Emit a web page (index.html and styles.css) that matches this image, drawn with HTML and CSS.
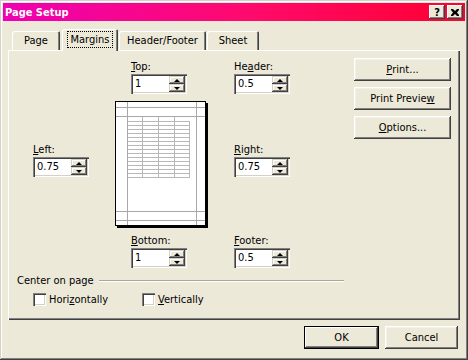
FILE: index.html
```html
<!DOCTYPE html>
<html lang="en">
<head>
    <meta charset="UTF-8">
    <title>Page Setup</title>
    <link rel="stylesheet" href="styles.css">
</head>
<body>
    <div class="window">
        <div class="titlebar">
            <span class="title">Page Setup</span>
            <div class="caption-btns">
                <div class="cap">?</div>
                <div class="cap">
                    <svg width="8" height="7" viewBox="0 0 8 7">
                        <path d="M0 0h2l2 2 2-2h2v1l-2 2.5 2 2.5v1h-2l-2-2-2 2h-2v-1l2-2.5-2-2.5z" fill="#000"/>
                    </svg>
                </div>
            </div>
        </div>

        <div class="tabs">
            <div class="tab t-page">Page</div>
            <div class="tab t-margins active"><span class="focus">Margins</span></div>
            <div class="tab t-header">Header/Footer</div>
            <div class="tab t-sheet">Sheet</div>
        </div>

        <div class="panel">
            <!-- top row -->
            <div class="field f-top">
                <label><u>T</u>op:</label>
                <div class="spin"><span class="val">1</span><div class="arrows"><div class="arr up"></div><div class="arr down"></div></div></div>
            </div>
            <div class="field f-header">
                <label>He<u>a</u>der:</label>
                <div class="spin"><span class="val">0.5</span><div class="arrows"><div class="arr up"></div><div class="arr down"></div></div></div>
            </div>
            <div class="side-btns">
                <div class="btn"><u>P</u>rint...</div>
                <div class="btn">Print Previe<u>w</u></div>
                <div class="btn"><u>O</u>ptions...</div>
            </div>

            <!-- middle row -->
            <div class="field f-left">
                <label><u>L</u>eft:</label>
                <div class="spin"><span class="val">0.75</span><div class="arrows"><div class="arr up"></div><div class="arr down"></div></div></div>
            </div>
            <div class="preview">
                <svg width="94" height="128" viewBox="0 0 94 128">
                    <rect x="0.5" y="0.5" width="90" height="124" fill="#fff" stroke="#000"/>
                    <rect x="91" y="2" width="2" height="125" fill="#000"/>
                    <rect x="2" y="125" width="91" height="2" fill="#000"/>
                    <g stroke="#a8a8a8">
                        <path d="M12.5 1v123M81.5 1v123M1 6.5h89M1 15.5h89M1 110.5h89M1 119.5h89"/>
                    </g>
                    <g stroke="#b8b8b8">
                        <path d="M27.5 16v61M43.5 16v61M59.5 16v61M74.5 20v57"/>
                        <path d="M13 20.5h62M13 24.5h62M13 28.5h62M13 32.5h62M13 36.5h62M13 40.5h62M13 44.5h62M13 48.5h62M13 52.5h62M13 56.5h62M13 60.5h62M13 64.5h62M13 68.5h62M13 72.5h62M13 76.5h62"/>
                    </g>
                </svg>
            </div>
            <div class="field f-right">
                <label><u>R</u>ight:</label>
                <div class="spin"><span class="val">0.75</span><div class="arrows"><div class="arr up"></div><div class="arr down"></div></div></div>
            </div>

            <!-- bottom row -->
            <div class="field f-bottom">
                <label><u>B</u>ottom:</label>
                <div class="spin"><span class="val">1</span><div class="arrows"><div class="arr up"></div><div class="arr down"></div></div></div>
            </div>
            <div class="field f-footer">
                <label><u>F</u>ooter:</label>
                <div class="spin"><span class="val">0.5</span><div class="arrows"><div class="arr up"></div><div class="arr down"></div></div></div>
            </div>

            <div class="group">
                <div class="group-head"><span>Center on page</span><div class="etch"></div></div>
                <div class="checks">
                    <div class="check c-hor"><div class="box"></div><span>Hori<u>z</u>ontally</span></div>
                    <div class="check"><div class="box"></div><span><u>V</u>ertically</span></div>
                </div>
            </div>
        </div>

        <div class="footer">
            <div class="btn default">OK</div>
            <div class="btn cancel">Cancel</div>
        </div>
    </div>
</body>
</html>
```

FILE: styles.css
```css
* {
    box-sizing: border-box;
}

body {
    margin: 0;
    background: #ece9d8;
    font-family: "DejaVu Sans Condensed", "Liberation Sans", sans-serif;
    font-size: 11px;
    color: #000;
}

u {
    text-decoration: underline;
    text-underline-offset: 1px;
}

.window {
    width: 468px;
    height: 360px;
    padding: 3px;
    display: flex;
    flex-direction: column;
    background: #ece9d8;
    box-shadow: inset -1px -1px #404040, inset 1px 1px #d4d0c8, inset -2px -2px #808080, inset 2px 2px #fff;
}

/* title bar */
.titlebar {
    height: 18px;
    display: flex;
    align-items: center;
    justify-content: space-between;
    padding: 0 2px 0 2px;
    background: linear-gradient(90deg, #ee00b4, #ff0a6a 55%, #ff0030);
}

.title {
    color: #fff;
    font-weight: bold;
    font-size: 11px;
}

.caption-btns {
    display: flex;
    gap: 2px;
}

.cap {
    width: 16px;
    height: 14px;
    display: flex;
    align-items: center;
    justify-content: center;
    background: #ece9d8;
    font-weight: bold;
    font-size: 11px;
    box-shadow: inset -1px -1px #404040, inset 1px 1px #fff, inset -2px -2px #808080;
}

/* tabs */
.tabs {
    height: 29px;
    display: flex;
    align-items: flex-end;
    padding-left: 9px;
}

.tab {
    height: 19px;
    padding-top: 3px;
    text-align: center;
    background: #ece9d8;
    border-radius: 2px 2px 0 0;
    box-shadow: inset 1px 1px #fff, inset -1px 0 #404040, inset -2px 0 #808080;
}

.t-page { width: 48px; margin-right: 2px; }
.t-margins { width: 56px; margin-right: 1px; }
.t-header { width: 87px; margin-right: 1px; }
.t-sheet { width: 52px; }

.tab.active {
    height: 22px;
    margin-bottom: -1px;
    padding-top: 4px;
    position: relative;
    z-index: 1;
}

.focus {
    outline: 1px dotted #000;
    outline-offset: 1px;
    padding: 0 2px;
}

/* panel */
.panel {
    width: 452px;
    height: 270px;
    margin-left: 5px;
    padding: 10px 0 0 25px;
    display: grid;
    grid-template-columns: 98px 103px 120px 97px;
    align-content: start;
    align-items: start;
    box-shadow: inset 1px 1px #fff, inset -1px -1px #404040, inset -2px -2px #808080;
}

.field {
    display: flex;
    flex-direction: column;
    gap: 1px;
}

.field label {
    line-height: 13px;
}

.f-top { grid-column: 2; grid-row: 1; }
.f-header { grid-column: 3; grid-row: 1; }
.f-left { grid-column: 1; grid-row: 2; margin-top: 49px; }
.f-right { grid-column: 3; grid-row: 2; margin-top: 49px; }
.f-bottom { grid-column: 2; grid-row: 3; margin-top: 5px; }
.f-footer { grid-column: 3; grid-row: 3; margin-top: 5px; }

.spin {
    width: 56px;
    height: 20px;
    display: flex;
    padding: 2px;
    background: #fff;
    box-shadow: inset 1px 1px #808080, inset 2px 2px #404040, inset -1px -1px #fff, inset -2px -2px #d4d0c8;
}

.spin .val {
    flex: 1;
    padding-left: 2px;
    line-height: 16px;
}

.arrows {
    width: 16px;
    display: flex;
    flex-direction: column;
}

.arr {
    flex: 1;
    display: flex;
    align-items: center;
    justify-content: center;
    background: #ece9d8;
    box-shadow: inset -1px -1px #404040, inset 1px 1px #d4d0c8, inset -2px -2px #808080, inset 2px 2px #fff;
}

.arr::after {
    content: "";
    border-left: 3px solid transparent;
    border-right: 3px solid transparent;
}

.arr.up::after {
    border-bottom: 3px solid #000;
}

.arr.down::after {
    border-top: 3px solid #000;
}

.preview {
    grid-column: 2;
    grid-row: 2;
    margin: 7px 0 0 -16px;
    height: 128px;
}

.preview svg {
    display: block;
}

/* buttons */
.side-btns {
    grid-column: 4;
    grid-row: 1 / span 3;
    margin-top: -2px;
    display: flex;
    flex-direction: column;
    gap: 6px;
}

.btn {
    width: 97px;
    height: 23px;
    display: flex;
    align-items: center;
    justify-content: center;
    background: #ece9d8;
    box-shadow: inset -1px -1px #404040, inset 1px 1px #fff, inset -2px -2px #808080, inset 2px 2px #f4f2e8;
}

/* center on page */
.group {
    grid-column: 1 / span 3;
    grid-row: 4;
    width: 327px;
    margin: 6px 0 0 -16px;
}

.group-head {
    display: flex;
    align-items: center;
    gap: 5px;
    line-height: 13px;
}

.etch {
    flex: 1;
    height: 2px;
    border-top: 1px solid #aca899;
    border-bottom: 1px solid #fff;
}

.checks {
    display: flex;
    padding-left: 16px;
    margin-top: 6px;
}

.check {
    display: flex;
    align-items: center;
    gap: 3px;
}

.c-hor {
    width: 109px;
}

.box {
    width: 13px;
    height: 13px;
    background: #fff;
    box-shadow: inset 1px 1px #808080, inset 2px 2px #404040, inset -1px -1px #fff, inset -2px -2px #d4d0c8;
}

/* dialog buttons */
.footer {
    display: flex;
    justify-content: flex-end;
    gap: 6px;
    padding: 6px 7px 0 0;
}

.footer .btn {
    width: 75px;
}

.footer .cancel {
    width: 73px;
}

.btn.default {
    box-shadow: inset 0 0 0 1px #000, inset -2px -2px #404040, inset 2px 2px #fff, inset -3px -3px #808080;
}
```
